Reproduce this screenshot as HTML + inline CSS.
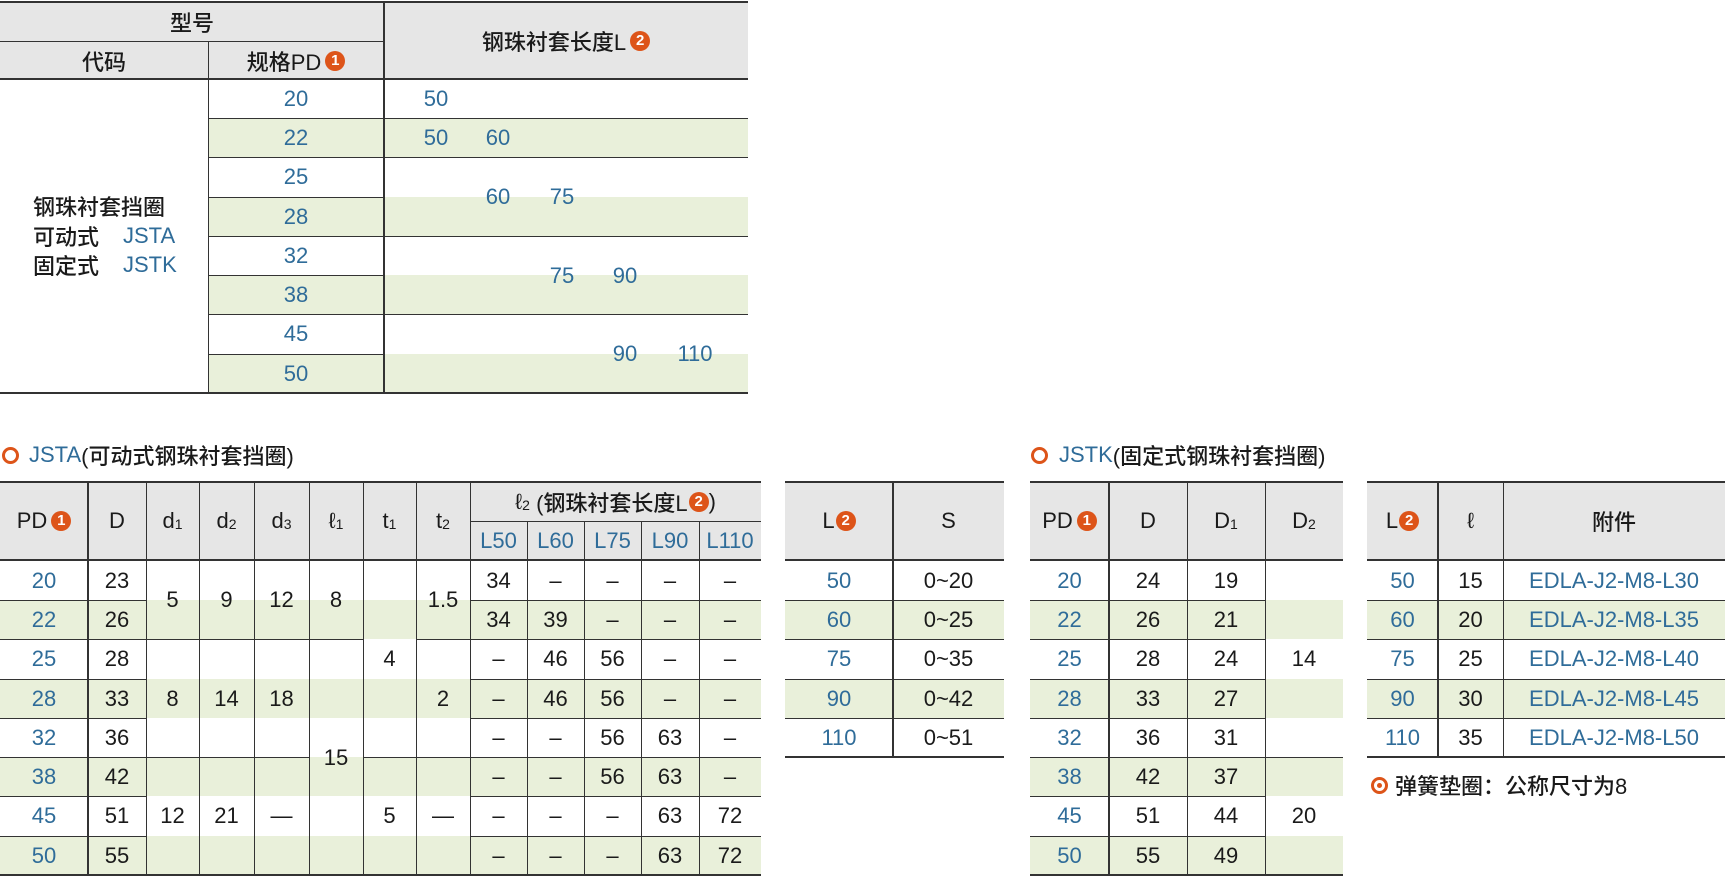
<!DOCTYPE html>
<html><head><meta charset="utf-8"><style>
body{margin:0;width:1725px;height:876px;position:relative;background:#fff;overflow:hidden;font-family:"Liberation Sans","Noto Sans CJK SC",sans-serif;font-weight:500}
.c{position:absolute;display:flex;align-items:center;justify-content:center;font-size:22px;color:#1a1a1a;white-space:nowrap}
.b{color:#2f6c99}
.g{position:absolute;background:#e9f0da}
.h{position:absolute;background:#e6e6e6}
.l{position:absolute;background:#333}
.k{display:inline-block;width:20px;height:20px;border-radius:50%;background:#dd5419;color:#fff;font-size:15px;font-weight:bold;line-height:20px;text-align:center;margin-left:4px}
.s{font-size:14px;position:relative;top:3px}
.ring{position:absolute;width:11px;height:11px;border:3px solid #dd5419;border-radius:50%}
</style></head><body>

<!-- TOP TABLE -->
<div class="h" style="left:0;top:2px;width:748px;height:77px"></div>
<div class="g" style="left:208px;top:118px;width:540px;height:39px"></div>
<div class="g" style="left:208px;top:197px;width:540px;height:39px"></div>
<div class="g" style="left:208px;top:275px;width:540px;height:39px"></div>
<div class="g" style="left:208px;top:354px;width:540px;height:39px"></div>
<div class="l" style="left:0;top:1px;width:748px;height:2px"></div>
<div class="l" style="left:0;top:41px;width:384px;height:1px"></div>
<div class="l" style="left:0;top:78px;width:748px;height:2px"></div>
<div class="l" style="left:0;top:392px;width:748px;height:2px"></div>
<div class="l" style="left:208px;top:42px;width:1px;height:351px"></div>
<div class="l" style="left:383px;top:2px;width:2px;height:391px"></div>
<div class="l" style="left:208px;top:118px;width:540px;height:1px"></div>
<div class="l" style="left:208px;top:157px;width:540px;height:1px"></div>
<div class="l" style="left:208px;top:197px;width:176px;height:1px"></div>
<div class="l" style="left:208px;top:236px;width:540px;height:1px"></div>
<div class="l" style="left:208px;top:275px;width:176px;height:1px"></div>
<div class="l" style="left:208px;top:314px;width:540px;height:1px"></div>
<div class="l" style="left:208px;top:354px;width:176px;height:1px"></div>
<div class="c" style="left:0;top:2px;width:384px;height:40px">型号</div>
<div class="c" style="left:0;top:42px;width:208px;height:37px">代码</div>
<div class="c" style="left:208px;top:42px;width:176px;height:37px">规格PD<span class="k">1</span></div>
<div class="c" style="left:384px;top:2px;width:364px;height:77px">钢珠衬套长度L<span class="k">2</span></div>
<div class="c b" style="left:208px;top:79px;width:176px;height:39px">20</div>
<div class="c b" style="left:208px;top:118px;width:176px;height:39px">22</div>
<div class="c b" style="left:208px;top:157px;width:176px;height:39px">25</div>
<div class="c b" style="left:208px;top:197px;width:176px;height:39px">28</div>
<div class="c b" style="left:208px;top:236px;width:176px;height:39px">32</div>
<div class="c b" style="left:208px;top:275px;width:176px;height:39px">38</div>
<div class="c b" style="left:208px;top:314px;width:176px;height:39px">45</div>
<div class="c b" style="left:208px;top:354px;width:176px;height:39px">50</div>
<div class="c b" style="left:406px;top:79px;width:60px;height:39px">50</div>
<div class="c b" style="left:406px;top:118px;width:60px;height:39px">50</div>
<div class="c b" style="left:468px;top:118px;width:60px;height:39px">60</div>
<div class="c b" style="left:468px;top:177px;width:60px;height:39px">60</div>
<div class="c b" style="left:532px;top:177px;width:60px;height:39px">75</div>
<div class="c b" style="left:532px;top:256px;width:60px;height:39px">75</div>
<div class="c b" style="left:595px;top:256px;width:60px;height:39px">90</div>
<div class="c b" style="left:595px;top:334px;width:60px;height:39px">90</div>
<div class="c b" style="left:665px;top:334px;width:60px;height:39px">110</div>
<div class="c" style="left:33px;top:192px;height:28px;justify-content:flex-start">钢珠衬套挡圈</div>
<div class="c" style="left:33px;top:222px;height:28px;justify-content:flex-start">可动式</div>
<div class="c b" style="left:123px;top:222px;height:28px;justify-content:flex-start">JSTA</div>
<div class="c" style="left:33px;top:251px;height:28px;justify-content:flex-start">固定式</div>
<div class="c b" style="left:123px;top:251px;height:28px;justify-content:flex-start">JSTK</div>

<!-- JSTA TITLE -->
<div class="ring" style="left:2px;top:447px"></div>
<div class="c" style="left:29px;top:440px;height:30px;justify-content:flex-start"><span class="b">JSTA</span>(可动式钢珠衬套挡圈)</div>

<!-- JSTA TABLE -->
<div class="h" style="left:0;top:482px;width:761px;height:78px"></div>
<div class="g" style="left:0;top:600px;width:761px;height:39px"></div>
<div class="g" style="left:0;top:679px;width:761px;height:39px"></div>
<div class="g" style="left:0;top:757px;width:761px;height:39px"></div>
<div class="g" style="left:0;top:836px;width:761px;height:39px"></div>
<div class="l" style="left:0;top:481px;width:761px;height:2px"></div>
<div class="l" style="left:0;top:559px;width:761px;height:2px"></div>
<div class="l" style="left:0;top:874px;width:761px;height:2px"></div>
<div class="l" style="left:470px;top:521px;width:291px;height:1px"></div>
<div class="l" style="left:87px;top:482px;width:2px;height:393px"></div>
<div class="l" style="left:146px;top:482px;width:1px;height:393px"></div>
<div class="l" style="left:199px;top:482px;width:1px;height:393px"></div>
<div class="l" style="left:254px;top:482px;width:1px;height:393px"></div>
<div class="l" style="left:309px;top:482px;width:1px;height:393px"></div>
<div class="l" style="left:363px;top:482px;width:1px;height:393px"></div>
<div class="l" style="left:416px;top:482px;width:1px;height:393px"></div>
<div class="l" style="left:470px;top:482px;width:1px;height:393px"></div>
<div class="l" style="left:527px;top:521px;width:1px;height:354px"></div>
<div class="l" style="left:584px;top:521px;width:1px;height:354px"></div>
<div class="l" style="left:641px;top:521px;width:1px;height:354px"></div>
<div class="l" style="left:699px;top:521px;width:1px;height:354px"></div>
<div class="l" style="left:0;top:600px;width:146px;height:1px"></div>
<div class="l" style="left:0;top:639px;width:363px;height:1px"></div>
<div class="l" style="left:416px;top:639px;width:54px;height:1px"></div>
<div class="l" style="left:0;top:679px;width:146px;height:1px"></div>
<div class="l" style="left:0;top:718px;width:146px;height:1px"></div>
<div class="l" style="left:0;top:757px;width:309px;height:1px"></div>
<div class="l" style="left:363px;top:757px;width:107px;height:1px"></div>
<div class="l" style="left:0;top:796px;width:146px;height:1px"></div>
<div class="l" style="left:0;top:836px;width:146px;height:1px"></div>
<div class="l" style="left:470px;top:600px;width:291px;height:1px"></div>
<div class="l" style="left:470px;top:639px;width:291px;height:1px"></div>
<div class="l" style="left:470px;top:679px;width:291px;height:1px"></div>
<div class="l" style="left:470px;top:718px;width:291px;height:1px"></div>
<div class="l" style="left:470px;top:757px;width:291px;height:1px"></div>
<div class="l" style="left:470px;top:796px;width:291px;height:1px"></div>
<div class="l" style="left:470px;top:836px;width:291px;height:1px"></div>
<div class="c" style="left:0;top:482px;width:88px;height:78px">PD<span class="k">1</span></div>
<div class="c" style="left:88px;top:482px;width:58px;height:78px">D</div>
<div class="c" style="left:146px;top:482px;width:53px;height:78px">d<span class="s">1</span></div>
<div class="c" style="left:199px;top:482px;width:55px;height:78px">d<span class="s">2</span></div>
<div class="c" style="left:254px;top:482px;width:55px;height:78px">d<span class="s">3</span></div>
<div class="c" style="left:309px;top:482px;width:54px;height:78px">ℓ<span class="s">1</span></div>
<div class="c" style="left:363px;top:482px;width:53px;height:78px">t<span class="s">1</span></div>
<div class="c" style="left:416px;top:482px;width:54px;height:78px">t<span class="s">2</span></div>
<div class="c" style="left:470px;top:482px;width:291px;height:39px">ℓ<span class="s">2</span>&nbsp;(钢珠衬套长度L<span class="k" style="margin-left:1px">2</span>)</div>
<div class="c b" style="left:470px;top:521px;width:57px;height:39px">L50</div>
<div class="c b" style="left:527px;top:521px;width:57px;height:39px">L60</div>
<div class="c b" style="left:584px;top:521px;width:57px;height:39px">L75</div>
<div class="c b" style="left:641px;top:521px;width:58px;height:39px">L90</div>
<div class="c b" style="left:699px;top:521px;width:62px;height:39px">L110</div>
<div class="c b" style="left:0;top:561px;width:88px;height:39px">20</div>
<div class="c b" style="left:0;top:600px;width:88px;height:39px">22</div>
<div class="c b" style="left:0;top:639px;width:88px;height:39px">25</div>
<div class="c b" style="left:0;top:679px;width:88px;height:39px">28</div>
<div class="c b" style="left:0;top:718px;width:88px;height:39px">32</div>
<div class="c b" style="left:0;top:757px;width:88px;height:39px">38</div>
<div class="c b" style="left:0;top:796px;width:88px;height:39px">45</div>
<div class="c b" style="left:0;top:836px;width:88px;height:39px">50</div>
<div class="c" style="left:88px;top:561px;width:58px;height:39px">23</div>
<div class="c" style="left:88px;top:600px;width:58px;height:39px">26</div>
<div class="c" style="left:88px;top:639px;width:58px;height:39px">28</div>
<div class="c" style="left:88px;top:679px;width:58px;height:39px">33</div>
<div class="c" style="left:88px;top:718px;width:58px;height:39px">36</div>
<div class="c" style="left:88px;top:757px;width:58px;height:39px">42</div>
<div class="c" style="left:88px;top:796px;width:58px;height:39px">51</div>
<div class="c" style="left:88px;top:836px;width:58px;height:39px">55</div>
<div class="c" style="left:146px;top:580px;width:53px;height:39px">5</div>
<div class="c" style="left:146px;top:679px;width:53px;height:39px">8</div>
<div class="c" style="left:146px;top:796px;width:53px;height:39px">12</div>
<div class="c" style="left:199px;top:580px;width:55px;height:39px">9</div>
<div class="c" style="left:199px;top:679px;width:55px;height:39px">14</div>
<div class="c" style="left:199px;top:796px;width:55px;height:39px">21</div>
<div class="c" style="left:254px;top:580px;width:55px;height:39px">12</div>
<div class="c" style="left:254px;top:679px;width:55px;height:39px">18</div>
<div class="c" style="left:254px;top:796px;width:55px;height:39px">—</div>
<div class="c" style="left:309px;top:580px;width:54px;height:39px">8</div>
<div class="c" style="left:309px;top:738px;width:54px;height:39px">15</div>
<div class="c" style="left:363px;top:639px;width:53px;height:39px">4</div>
<div class="c" style="left:363px;top:796px;width:53px;height:39px">5</div>
<div class="c" style="left:416px;top:580px;width:54px;height:39px">1.5</div>
<div class="c" style="left:416px;top:679px;width:54px;height:39px">2</div>
<div class="c" style="left:416px;top:796px;width:54px;height:39px">—</div>
<div class="c" style="left:470px;top:561px;width:57px;height:39px">34</div>
<div class="c" style="left:527px;top:561px;width:57px;height:39px">–</div>
<div class="c" style="left:584px;top:561px;width:57px;height:39px">–</div>
<div class="c" style="left:641px;top:561px;width:58px;height:39px">–</div>
<div class="c" style="left:699px;top:561px;width:62px;height:39px">–</div>
<div class="c" style="left:470px;top:600px;width:57px;height:39px">34</div>
<div class="c" style="left:527px;top:600px;width:57px;height:39px">39</div>
<div class="c" style="left:584px;top:600px;width:57px;height:39px">–</div>
<div class="c" style="left:641px;top:600px;width:58px;height:39px">–</div>
<div class="c" style="left:699px;top:600px;width:62px;height:39px">–</div>
<div class="c" style="left:470px;top:639px;width:57px;height:39px">–</div>
<div class="c" style="left:527px;top:639px;width:57px;height:39px">46</div>
<div class="c" style="left:584px;top:639px;width:57px;height:39px">56</div>
<div class="c" style="left:641px;top:639px;width:58px;height:39px">–</div>
<div class="c" style="left:699px;top:639px;width:62px;height:39px">–</div>
<div class="c" style="left:470px;top:679px;width:57px;height:39px">–</div>
<div class="c" style="left:527px;top:679px;width:57px;height:39px">46</div>
<div class="c" style="left:584px;top:679px;width:57px;height:39px">56</div>
<div class="c" style="left:641px;top:679px;width:58px;height:39px">–</div>
<div class="c" style="left:699px;top:679px;width:62px;height:39px">–</div>
<div class="c" style="left:470px;top:718px;width:57px;height:39px">–</div>
<div class="c" style="left:527px;top:718px;width:57px;height:39px">–</div>
<div class="c" style="left:584px;top:718px;width:57px;height:39px">56</div>
<div class="c" style="left:641px;top:718px;width:58px;height:39px">63</div>
<div class="c" style="left:699px;top:718px;width:62px;height:39px">–</div>
<div class="c" style="left:470px;top:757px;width:57px;height:39px">–</div>
<div class="c" style="left:527px;top:757px;width:57px;height:39px">–</div>
<div class="c" style="left:584px;top:757px;width:57px;height:39px">56</div>
<div class="c" style="left:641px;top:757px;width:58px;height:39px">63</div>
<div class="c" style="left:699px;top:757px;width:62px;height:39px">–</div>
<div class="c" style="left:470px;top:796px;width:57px;height:39px">–</div>
<div class="c" style="left:527px;top:796px;width:57px;height:39px">–</div>
<div class="c" style="left:584px;top:796px;width:57px;height:39px">–</div>
<div class="c" style="left:641px;top:796px;width:58px;height:39px">63</div>
<div class="c" style="left:699px;top:796px;width:62px;height:39px">72</div>
<div class="c" style="left:470px;top:836px;width:57px;height:39px">–</div>
<div class="c" style="left:527px;top:836px;width:57px;height:39px">–</div>
<div class="c" style="left:584px;top:836px;width:57px;height:39px">–</div>
<div class="c" style="left:641px;top:836px;width:58px;height:39px">63</div>
<div class="c" style="left:699px;top:836px;width:62px;height:39px">72</div>

<!-- L-S TABLE -->
<div class="h" style="left:785px;top:482px;width:219px;height:78px"></div>
<div class="g" style="left:785px;top:600px;width:219px;height:39px"></div>
<div class="g" style="left:785px;top:679px;width:219px;height:39px"></div>
<div class="l" style="left:785px;top:481px;width:219px;height:2px"></div>
<div class="l" style="left:785px;top:559px;width:219px;height:2px"></div>
<div class="l" style="left:785px;top:756px;width:219px;height:2px"></div>
<div class="l" style="left:892px;top:482px;width:2px;height:275px"></div>
<div class="l" style="left:785px;top:600px;width:219px;height:1px"></div>
<div class="l" style="left:785px;top:639px;width:219px;height:1px"></div>
<div class="l" style="left:785px;top:679px;width:219px;height:1px"></div>
<div class="l" style="left:785px;top:718px;width:219px;height:1px"></div>
<div class="c" style="left:785px;top:482px;width:108px;height:78px">L<span class="k" style="margin-left:1px">2</span></div>
<div class="c" style="left:893px;top:482px;width:111px;height:78px">S</div>
<div class="c b" style="left:785px;top:561px;width:108px;height:39px">50</div>
<div class="c b" style="left:785px;top:600px;width:108px;height:39px">60</div>
<div class="c b" style="left:785px;top:639px;width:108px;height:39px">75</div>
<div class="c b" style="left:785px;top:679px;width:108px;height:39px">90</div>
<div class="c b" style="left:785px;top:718px;width:108px;height:39px">110</div>
<div class="c" style="left:893px;top:561px;width:111px;height:39px">0~20</div>
<div class="c" style="left:893px;top:600px;width:111px;height:39px">0~25</div>
<div class="c" style="left:893px;top:639px;width:111px;height:39px">0~35</div>
<div class="c" style="left:893px;top:679px;width:111px;height:39px">0~42</div>
<div class="c" style="left:893px;top:718px;width:111px;height:39px">0~51</div>

<!-- JSTK TITLE -->
<div class="ring" style="left:1031px;top:447px"></div>
<div class="c" style="left:1059px;top:440px;height:30px;justify-content:flex-start"><span class="b">JSTK</span>(固定式钢珠衬套挡圈)</div>

<!-- JSTK TABLE -->
<div class="h" style="left:1030px;top:482px;width:313px;height:78px"></div>
<div class="g" style="left:1030px;top:600px;width:313px;height:39px"></div>
<div class="g" style="left:1030px;top:679px;width:313px;height:39px"></div>
<div class="g" style="left:1030px;top:757px;width:313px;height:39px"></div>
<div class="g" style="left:1030px;top:836px;width:313px;height:39px"></div>
<div class="l" style="left:1030px;top:481px;width:313px;height:2px"></div>
<div class="l" style="left:1030px;top:559px;width:313px;height:2px"></div>
<div class="l" style="left:1030px;top:874px;width:313px;height:2px"></div>
<div class="l" style="left:1108px;top:482px;width:2px;height:393px"></div>
<div class="l" style="left:1187px;top:482px;width:1px;height:393px"></div>
<div class="l" style="left:1265px;top:482px;width:1px;height:393px"></div>
<div class="l" style="left:1030px;top:600px;width:235px;height:1px"></div>
<div class="l" style="left:1030px;top:639px;width:235px;height:1px"></div>
<div class="l" style="left:1030px;top:679px;width:235px;height:1px"></div>
<div class="l" style="left:1030px;top:718px;width:235px;height:1px"></div>
<div class="l" style="left:1030px;top:757px;width:313px;height:1px"></div>
<div class="l" style="left:1030px;top:796px;width:235px;height:1px"></div>
<div class="l" style="left:1030px;top:836px;width:235px;height:1px"></div>
<div class="c" style="left:1030px;top:482px;width:79px;height:78px">PD<span class="k">1</span></div>
<div class="c" style="left:1109px;top:482px;width:78px;height:78px">D</div>
<div class="c" style="left:1187px;top:482px;width:78px;height:78px">D<span class="s">1</span></div>
<div class="c" style="left:1265px;top:482px;width:78px;height:78px">D<span class="s">2</span></div>
<div class="c b" style="left:1030px;top:561px;width:79px;height:39px">20</div>
<div class="c b" style="left:1030px;top:600px;width:79px;height:39px">22</div>
<div class="c b" style="left:1030px;top:639px;width:79px;height:39px">25</div>
<div class="c b" style="left:1030px;top:679px;width:79px;height:39px">28</div>
<div class="c b" style="left:1030px;top:718px;width:79px;height:39px">32</div>
<div class="c b" style="left:1030px;top:757px;width:79px;height:39px">38</div>
<div class="c b" style="left:1030px;top:796px;width:79px;height:39px">45</div>
<div class="c b" style="left:1030px;top:836px;width:79px;height:39px">50</div>
<div class="c" style="left:1109px;top:561px;width:78px;height:39px">24</div>
<div class="c" style="left:1109px;top:600px;width:78px;height:39px">26</div>
<div class="c" style="left:1109px;top:639px;width:78px;height:39px">28</div>
<div class="c" style="left:1109px;top:679px;width:78px;height:39px">33</div>
<div class="c" style="left:1109px;top:718px;width:78px;height:39px">36</div>
<div class="c" style="left:1109px;top:757px;width:78px;height:39px">42</div>
<div class="c" style="left:1109px;top:796px;width:78px;height:39px">51</div>
<div class="c" style="left:1109px;top:836px;width:78px;height:39px">55</div>
<div class="c" style="left:1187px;top:561px;width:78px;height:39px">19</div>
<div class="c" style="left:1187px;top:600px;width:78px;height:39px">21</div>
<div class="c" style="left:1187px;top:639px;width:78px;height:39px">24</div>
<div class="c" style="left:1187px;top:679px;width:78px;height:39px">27</div>
<div class="c" style="left:1187px;top:718px;width:78px;height:39px">31</div>
<div class="c" style="left:1187px;top:757px;width:78px;height:39px">37</div>
<div class="c" style="left:1187px;top:796px;width:78px;height:39px">44</div>
<div class="c" style="left:1187px;top:836px;width:78px;height:39px">49</div>
<div class="c" style="left:1265px;top:639px;width:78px;height:39px">14</div>
<div class="c" style="left:1265px;top:796px;width:78px;height:39px">20</div>

<!-- RIGHT TABLE -->
<div class="h" style="left:1367px;top:482px;width:358px;height:78px"></div>
<div class="g" style="left:1367px;top:600px;width:358px;height:39px"></div>
<div class="g" style="left:1367px;top:679px;width:358px;height:39px"></div>
<div class="l" style="left:1367px;top:481px;width:358px;height:2px"></div>
<div class="l" style="left:1367px;top:559px;width:358px;height:2px"></div>
<div class="l" style="left:1367px;top:756px;width:358px;height:2px"></div>
<div class="l" style="left:1437px;top:482px;width:2px;height:275px"></div>
<div class="l" style="left:1503px;top:482px;width:1px;height:275px"></div>
<div class="l" style="left:1367px;top:600px;width:358px;height:1px"></div>
<div class="l" style="left:1367px;top:639px;width:358px;height:1px"></div>
<div class="l" style="left:1367px;top:679px;width:358px;height:1px"></div>
<div class="l" style="left:1367px;top:718px;width:358px;height:1px"></div>
<div class="c" style="left:1367px;top:482px;width:71px;height:78px">L<span class="k" style="margin-left:1px">2</span></div>
<div class="c" style="left:1438px;top:482px;width:65px;height:78px">ℓ</div>
<div class="c" style="left:1503px;top:482px;width:222px;height:78px">附件</div>
<div class="c b" style="left:1367px;top:561px;width:71px;height:39px">50</div>
<div class="c b" style="left:1367px;top:600px;width:71px;height:39px">60</div>
<div class="c b" style="left:1367px;top:639px;width:71px;height:39px">75</div>
<div class="c b" style="left:1367px;top:679px;width:71px;height:39px">90</div>
<div class="c b" style="left:1367px;top:718px;width:71px;height:39px">110</div>
<div class="c" style="left:1438px;top:561px;width:65px;height:39px">15</div>
<div class="c" style="left:1438px;top:600px;width:65px;height:39px">20</div>
<div class="c" style="left:1438px;top:639px;width:65px;height:39px">25</div>
<div class="c" style="left:1438px;top:679px;width:65px;height:39px">30</div>
<div class="c" style="left:1438px;top:718px;width:65px;height:39px">35</div>
<div class="c b" style="left:1503px;top:561px;width:222px;height:39px">EDLA-J2-M8-L30</div>
<div class="c b" style="left:1503px;top:600px;width:222px;height:39px">EDLA-J2-M8-L35</div>
<div class="c b" style="left:1503px;top:639px;width:222px;height:39px">EDLA-J2-M8-L40</div>
<div class="c b" style="left:1503px;top:679px;width:222px;height:39px">EDLA-J2-M8-L45</div>
<div class="c b" style="left:1503px;top:718px;width:222px;height:39px">EDLA-J2-M8-L50</div>
<div class="ring" style="left:1371px;top:777px"></div>
<div style="position:absolute;left:1377px;top:783px;width:5px;height:5px;border-radius:50%;background:#dd5419"></div>
<div class="c" style="left:1395px;top:770px;height:30px;justify-content:flex-start">弹簧垫圈：公称尺寸为8</div>
</body></html>
